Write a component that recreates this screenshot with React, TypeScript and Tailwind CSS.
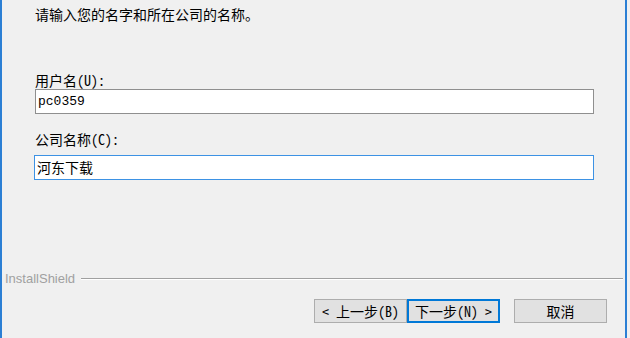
import React from "react";

const font = {
  fontFamily: '"Noto Sans Mono CJK SC", "Noto Sans CJK SC", "Liberation Sans", sans-serif',
};

function WinButton({ label, primary }: { label: string; primary?: boolean }) {
  return (
    <button
      className={
        "w-[93px] h-[24px] flex items-center justify-center text-[14px] leading-[16px] text-black bg-[#e1e1e1] " +
        (primary ? "border-2 border-[#0078d7]" : "border border-[#adadad]")
      }
    >
      {label}
    </button>
  );
}

export default function App() {
  return (
    <div className="w-[630px] h-[338px] bg-[#f0f0f0] flex text-black" style={font}>
      <div className="w-[627px] h-full border-l-2 border-r-2 border-[#2b7fd4] flex flex-col">
        <p className="mt-[6px] ml-[33px] text-[14px] leading-[16px]">请输入您的名字和所在公司的名称。</p>

        <label className="mt-[50px] ml-[33px] text-[14px] leading-[16px]">用户名(U):</label>
        <div className="mt-[1px] ml-[33px] w-[559px] h-[25px] bg-white border border-[#8f8f8f] flex items-center px-[2px]">
          <span className="text-[13px]" style={{ fontFamily: '"Liberation Mono", monospace' }}>
            pc0359
          </span>
        </div>

        <label className="mt-[17px] ml-[33px] text-[14px] leading-[16px]">公司名称(C):</label>
        <div className="mt-[8px] ml-[32px] w-[560px] h-[25px] bg-white border border-[#3d92e4] flex items-center px-[2px] text-[14px]">
          河东下载
        </div>

        <div className="flex-1" />

        <div className="flex items-center h-[14px] pl-[3px] pr-[2px]">
          <span
            className="text-[13px] leading-[14px] text-[#a0a0a0]"
            style={{ fontFamily: '"Liberation Sans", Arial, sans-serif' }}
          >
            InstallShield
          </span>
          <div className="flex-1 ml-[6px] flex flex-col">
            <div className="h-px bg-[#a0a0a0]" />
            <div className="h-px bg-white" />
          </div>
        </div>

        <div className="mt-[13px] mb-[15px] flex pl-[312px]">
          <WinButton label="< 上一步(B)" />
          <WinButton label="下一步(N) >" primary />
          <div className="w-[14px]" />
          <WinButton label="取消" />
        </div>
      </div>
    </div>
  );
}
